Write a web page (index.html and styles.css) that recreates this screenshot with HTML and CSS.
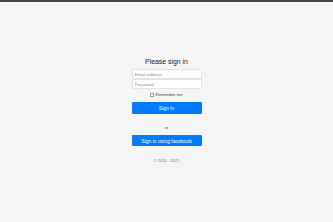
FILE: index.html
```html
<!DOCTYPE html>
<html lang="en">
  <head>
    <meta charset="UTF-8" />
    <meta name="viewport" content="width=device-width, initial-scale=1.0" />
    <title>Sign in</title>
    <link rel="stylesheet" href="styles.css">
  </head>
  <body>
    <div class="topbar"></div>
    <div class="page">
      <form class="form-signin">
        <h1 class="title">Please sign in</h1>
        <div class="fields">
          <input type="email" class="field" placeholder="Email address" />
          <input type="password" class="field" placeholder="Password" />
        </div>
        <label class="remember">
          <span class="check"></span>
          <span>Remember me</span>
        </label>
        <button type="button" class="btn">Sign in</button>
        <div class="or">or</div>
        <button type="button" class="btn">Sign in using facebook</button>
        <p class="copy">&copy; 2020 - 2021</p>
      </form>
    </div>
  </body>
</html>
```

FILE: styles.css
```css
html,
body {
  height: 100%;
}

body {
  font-family: "Liberation Sans", Arial, sans-serif;
  margin: 0;
  padding: 0;
  background-color: #f5f5f5;
  display: flex;
  flex-direction: column;
}

.topbar {
  height: 2px;
  background-color: #444;
}

.page {
  flex: 1;
  display: flex;
  align-items: center;
  justify-content: center;
}

.form-signin {
  width: 70px;
  display: flex;
  flex-direction: column;
  text-align: center;
  margin-top: -3px;
}

.title {
  font-size: 6.9px;
  font-weight: normal;
  line-height: 8px;
  color: #212529;
  margin: 0 0 3px;
}

.fields {
  display: flex;
  flex-direction: column;
}

.field {
  box-sizing: border-box;
  height: 10.5px;
  width: 100%;
  margin: 0;
  padding: 0 2px;
  font-family: inherit;
  font-size: 4.4px;
  border: 0.5px solid #e3e3e3;
  background-color: #fff;
  outline: none;
}

.field:first-child {
  border-radius: 1px 1px 0 0;
}

.field:last-child {
  border-radius: 0 0 1px 1px;
  margin-top: -0.5px;
}

.field::placeholder {
  color: #8a8a8a;
}

.remember {
  display: flex;
  align-items: center;
  justify-content: center;
  gap: 1.5px;
  font-size: 4.1px;
  color: #444;
  height: 7px;
  margin: 2px 0 4px;
}

.check {
  box-sizing: border-box;
  width: 3.5px;
  height: 3.5px;
  border: 0.5px solid #999;
  border-radius: 0.5px;
  background-color: #fff;
}

.btn {
  height: 11.5px;
  width: 100%;
  padding: 0;
  background-color: #007bff;
  color: #fff;
  border: none;
  border-radius: 1px;
  font-family: inherit;
  font-size: 5px;
}

.or {
  font-size: 4px;
  color: #444;
  line-height: 5px;
  margin: 11px 0 5px;
}

.copy {
  font-size: 4px;
  color: #6c757d;
  margin: 12px 0 0;
}
```
